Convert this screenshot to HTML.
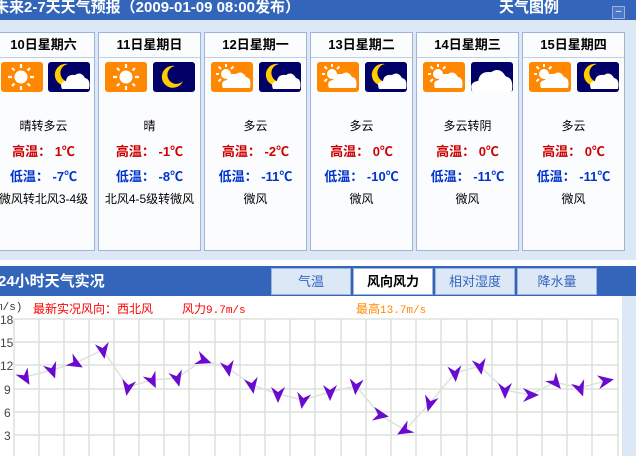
<!DOCTYPE html>
<html><head><meta charset="utf-8"><style>
*{margin:0;padding:0;box-sizing:border-box}
body{width:636px;height:456px;overflow:hidden;background:#fff;font-family:"Liberation Sans","Noto Sans CJK SC",sans-serif;font-size:12px;position:relative}
.abs{position:absolute}
.top{left:0;top:0;width:636px;height:20px;background:#3366bb}
.band{left:0;top:20px;width:636px;height:240px;background:#dde8f6}
.card{position:absolute;top:32px;width:103px;height:219px;background:#fbfcfe;border:1px solid #9fb4d8;text-align:center}
.card .d{height:25px;line-height:24px;font-weight:bold;font-size:13px;border-bottom:1px solid #bfcde6;color:#000}
.ic{position:absolute;top:29px;width:42px;height:30px;border-radius:3px}
.o{background:#ff8800}.n{background:#000066}
.t{position:absolute;left:0;width:100%;white-space:nowrap;font-size:12px}
.hi{color:#cc0000;font-weight:bold;font-size:13px}
.lo{color:#0033cc;font-weight:bold;font-size:13px}
.tab{position:absolute;top:268px;height:27px;width:80px;background:#dde8f6;border:1px solid #9fb4d8;color:#3366bb;text-align:center;line-height:25px;font-size:13px}
</style></head><body>
<div class="abs top"></div>
<div class="abs" style="left:-6px;top:-4px;color:#fff;font-weight:bold;font-size:15px;white-space:nowrap">未来2-7天天气预报（2009-01-09 08:00发布）</div>
<div class="abs" style="left:499px;top:-4px;color:#fff;font-weight:bold;font-size:15px">天气图例</div>
<div class="abs" style="left:612px;top:6px;width:13px;height:13px;border:1px solid #aac;background:#4a78c8;color:#fff;font-size:10px;line-height:9px;text-align:center">–</div>
<div class="abs band"></div>

<svg width="0" height="0" style="position:absolute"><defs>
<g id="sun"><circle cx="0" cy="0" r="6.5" fill="#fff"/><g stroke="#fff" stroke-width="2.2"><line x1="0" y1="-9" x2="0" y2="-13"/><line x1="0" y1="9" x2="0" y2="13"/><line x1="-9" y1="0" x2="-13" y2="0"/><line x1="9" y1="0" x2="13" y2="0"/><line x1="6.5" y1="6.5" x2="9" y2="9"/><line x1="-6.5" y1="6.5" x2="-9" y2="9"/><line x1="6.5" y1="-6.5" x2="9" y2="-9"/><line x1="-6.5" y1="-6.5" x2="-9" y2="-9"/></g></g>
<g id="ssun"><circle cx="0" cy="0" r="5" fill="#fff"/><g stroke="#fff" stroke-width="2"><line x1="0" y1="-7" x2="0" y2="-10"/><line x1="-7" y1="0" x2="-10" y2="0"/><line x1="5" y1="-5" x2="7.5" y2="-7.5"/><line x1="-5" y1="-5" x2="-7.5" y2="-7.5"/><line x1="-5" y1="5" x2="-7.5" y2="7.5"/></g></g>
<path id="cloud" d="M-13,7 Q-16,0 -9,-1 Q-8,-8 0,-7 Q6,-11 10,-4 Q16,-3 14,7 Z" fill="#fff"/>
<path id="moon" d="M3,-11 A11,11 0 1 0 11,4 A9,9 0 1 1 3,-11Z" fill="#ffcc00"/>
</defs></svg>

<div class="card" style="left:-8px"><div class="d">10日星期六</div>
<svg class="ic o" style="left:8px"><use href="#sun" x="20" y="15"/></svg>
<svg class="ic n" style="left:55px"><use href="#moon" x="17" y="13"/><use href="#cloud" x="27" y="20"/></svg>
<div class="t" style="top:84px">晴转多云</div><div class="t hi" style="top:108px">高温： 1℃</div><div class="t lo" style="top:133px">低温： -7℃</div><div class="t" style="top:157px">微风转北风3-4级</div></div>

<div class="card" style="left:98px"><div class="d">11日星期日</div>
<svg class="ic o" style="left:6px"><use href="#sun" x="21" y="15"/></svg>
<svg class="ic n" style="left:54px"><use href="#moon" x="19" y="15"/></svg>
<div class="t" style="top:84px">晴</div><div class="t hi" style="top:108px">高温： -1℃</div><div class="t lo" style="top:133px">低温： -8℃</div><div class="t" style="top:157px">北风4-5级转微风</div></div>

<div class="card" style="left:204px"><div class="d">12日星期一</div>
<svg class="ic o" style="left:6px"><use href="#ssun" x="15" y="12"/><use href="#cloud" x="25" y="19"/></svg>
<svg class="ic n" style="left:54px"><use href="#moon" x="17" y="13"/><use href="#cloud" x="27" y="20"/></svg>
<div class="t" style="top:84px">多云</div><div class="t hi" style="top:108px">高温： -2℃</div><div class="t lo" style="top:133px">低温： -11℃</div><div class="t" style="top:157px">微风</div></div>

<div class="card" style="left:310px"><div class="d">13日星期二</div>
<svg class="ic o" style="left:6px"><use href="#ssun" x="15" y="12"/><use href="#cloud" x="25" y="19"/></svg>
<svg class="ic n" style="left:54px"><use href="#moon" x="17" y="13"/><use href="#cloud" x="27" y="20"/></svg>
<div class="t" style="top:84px">多云</div><div class="t hi" style="top:108px">高温： 0℃</div><div class="t lo" style="top:133px">低温： -10℃</div><div class="t" style="top:157px">微风</div></div>

<div class="card" style="left:416px"><div class="d">14日星期三</div>
<svg class="ic o" style="left:6px"><use href="#ssun" x="15" y="12"/><use href="#cloud" x="25" y="19"/></svg>
<svg class="ic n" style="left:54px"><use href="#cloud" x="14" y="14" transform="scale(1.45)"/></svg>
<div class="t" style="top:84px">多云转阴</div><div class="t hi" style="top:108px">高温： 0℃</div><div class="t lo" style="top:133px">低温： -11℃</div><div class="t" style="top:157px">微风</div></div>

<div class="card" style="left:522px"><div class="d">15日星期四</div>
<svg class="ic o" style="left:6px"><use href="#ssun" x="15" y="12"/><use href="#cloud" x="25" y="19"/></svg>
<svg class="ic n" style="left:54px"><use href="#moon" x="17" y="13"/><use href="#cloud" x="27" y="20"/></svg>
<div class="t" style="top:84px">多云</div><div class="t hi" style="top:108px">高温： 0℃</div><div class="t lo" style="top:133px">低温： -11℃</div><div class="t" style="top:157px">微风</div></div>

<div class="abs" style="left:0;top:266px;width:636px;height:30px;background:#3366bb"></div>
<div class="abs" style="left:-2px;top:270px;color:#fff;font-weight:bold;font-size:15px">24小时天气实况</div>
<div class="tab" style="left:271px">气温</div>
<div class="tab" style="left:353px;background:#fff;color:#000;font-weight:bold">风向风力</div>
<div class="tab" style="left:435px">相对湿度</div>
<div class="tab" style="left:517px">降水量</div>
<div class="abs" style="left:622px;top:296px;width:14px;height:160px;background:#dde8f6"></div>

<div class="abs" style="left:-4px;top:302px;font-family:'Liberation Mono',monospace;font-size:11px;color:#333">m/s)</div>
<div class="abs" style="left:33px;top:300px;color:#f00">最新实况风向：西北风</div>
<div class="abs" style="left:182px;top:300px;color:#f00">风力<span style="font-family:'Liberation Mono',monospace;font-size:11px">9.7m/s</span></div>
<div class="abs" style="left:356px;top:300px;color:#f80">最高<span style="font-family:'Liberation Mono',monospace;font-size:11px">13.7m/s</span></div>

<svg class="abs" style="left:0;top:310px" width="622" height="146">
<g fill="#444" font-family="Liberation Sans" font-size="12">
<text x="0" y="14">18</text><text x="0" y="37">15</text><text x="0" y="60">12</text><text x="4" y="84">9</text><text x="4" y="107">6</text><text x="4" y="130">3</text></g>
<g stroke="#d8ddd4" stroke-width="1.3">
<line x1="14" y1="9" x2="618" y2="9"/><line x1="14" y1="32" x2="618" y2="32"/><line x1="14" y1="55" x2="618" y2="55"/><line x1="14" y1="79" x2="618" y2="79"/><line x1="14" y1="102" x2="618" y2="102"/><line x1="14" y1="125" x2="618" y2="125"/>
<line x1="14" y1="9" x2="14" y2="146"/><line x1="39" y1="9" x2="39" y2="146"/><line x1="64" y1="9" x2="64" y2="146"/><line x1="89" y1="9" x2="89" y2="146"/><line x1="114" y1="9" x2="114" y2="146"/><line x1="139" y1="9" x2="139" y2="146"/><line x1="164" y1="9" x2="164" y2="146"/><line x1="189" y1="9" x2="189" y2="146"/><line x1="215" y1="9" x2="215" y2="146"/><line x1="240" y1="9" x2="240" y2="146"/><line x1="265" y1="9" x2="265" y2="146"/><line x1="290" y1="9" x2="290" y2="146"/><line x1="315" y1="9" x2="315" y2="146"/><line x1="341" y1="9" x2="341" y2="146"/><line x1="366" y1="9" x2="366" y2="146"/><line x1="391" y1="9" x2="391" y2="146"/><line x1="416" y1="9" x2="416" y2="146"/><line x1="441" y1="9" x2="441" y2="146"/><line x1="467" y1="9" x2="467" y2="146"/><line x1="492" y1="9" x2="492" y2="146"/><line x1="517" y1="9" x2="517" y2="146"/><line x1="542" y1="9" x2="542" y2="146"/><line x1="567" y1="9" x2="567" y2="146"/><line x1="592" y1="9" x2="592" y2="146"/><line x1="618" y1="9" x2="618" y2="146"/></g>
<polyline fill="none" stroke="#dde2dd" stroke-width="1.5" points="25,67 52,60 75,53 103,40 128,77 152,70 177,68 203,50 228,58 252,75 278,84 303,90 330,82 356,76 380,105 405,120 430,93 455,63 480,56 505,80 530,85 555,72 580,78 605,71"/>
<defs><path id="ar" d="M0,9 L-7,-7 L0,-2 L7,-7 Z" fill="#6a0ad0"/></defs>
<g>
<use href="#ar" transform="translate(25,67) rotate(-30)"/><use href="#ar" transform="translate(52,60) rotate(-20)"/><use href="#ar" transform="translate(75,53) rotate(-60)"/><use href="#ar" transform="translate(103,40) rotate(-10)"/><use href="#ar" transform="translate(128,77) rotate(10)"/><use href="#ar" transform="translate(152,70) rotate(-25)"/><use href="#ar" transform="translate(177,68) rotate(-15)"/><use href="#ar" transform="translate(203,50) rotate(-70)"/><use href="#ar" transform="translate(228,58) rotate(-10)"/><use href="#ar" transform="translate(252,75) rotate(-10)"/><use href="#ar" transform="translate(278,84) rotate(0)"/><use href="#ar" transform="translate(303,90) rotate(10)"/><use href="#ar" transform="translate(330,82) rotate(0)"/><use href="#ar" transform="translate(356,76) rotate(5)"/><use href="#ar" transform="translate(380,105) rotate(-80)"/><use href="#ar" transform="translate(405,120) rotate(60)"/><use href="#ar" transform="translate(430,93) rotate(15)"/><use href="#ar" transform="translate(455,63) rotate(-5)"/><use href="#ar" transform="translate(480,56) rotate(-10)"/><use href="#ar" transform="translate(505,80) rotate(0)"/><use href="#ar" transform="translate(530,85) rotate(-90)"/><use href="#ar" transform="translate(555,72) rotate(-40)"/><use href="#ar" transform="translate(580,78) rotate(-20)"/><use href="#ar" transform="translate(605,71) rotate(-100)"/>
</g></svg>
</body></html>
